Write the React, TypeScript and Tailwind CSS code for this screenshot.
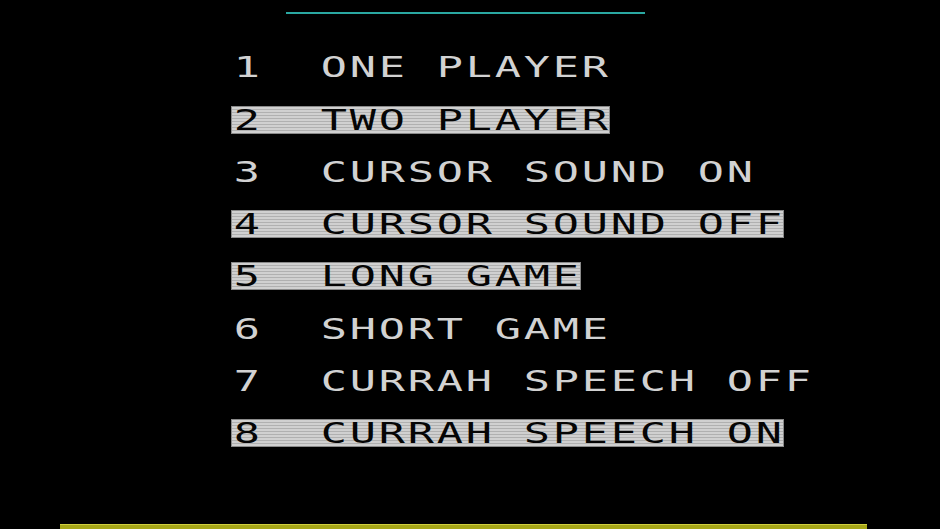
import React from "react";

const rows: { text: string; hi: boolean }[] = [
  { text: "1  ONE PLAYER", hi: false },
  { text: "2  TWO PLAYER", hi: true },
  { text: "3  CURSOR SOUND ON", hi: false },
  { text: "4  CURSOR SOUND OFF", hi: true },
  { text: "5  LONG GAME", hi: true },
  { text: "6  SHORT GAME", hi: false },
  { text: "7  CURRAH SPEECH OFF", hi: false },
  { text: "8  CURRAH SPEECH ON", hi: true },
];

function Row({ text, hi }: { text: string; hi: boolean }) {
  return (
    <div
      className={
        hi
          ? "inline-flex h-[26px] items-center self-start bg-[repeating-linear-gradient(to_bottom,#d0d0d0_0px,#d0d0d0_2px,#b0b0b0_2px,#b0b0b0_3px)] text-[#050505] outline outline-1 outline-[#8a8a8a]"
          : "inline-flex h-[26px] items-center self-start text-[#d2d2d2]"
      }
    >
      {text.split("").map((c, i) => (
        <span key={i} className="inline-flex w-[29px] justify-center">
          <span className="inline-block scale-x-[1.5] font-['DejaVu_Sans_Mono',monospace] text-[29px] leading-[26px]">
            {c === " " ? "\u00a0" : c}
          </span>
        </span>
      ))}
    </div>
  );
}

export default function App() {
  return (
    <div className="flex h-[529px] w-[940px] flex-col overflow-hidden bg-black">
      <div className="ml-[286px] mt-[12px] h-[3px] w-[359px] bg-[#2aa8a2]" />
      <div className="ml-[232px] mt-[40px] flex flex-col gap-[26.3px]">
        {rows.map((r, i) => (
          <Row key={i} text={r.text} hi={r.hi} />
        ))}
      </div>
      <div className="ml-[60px] mt-[78px] h-[6px] w-[807px] border-t border-[#d0d040] bg-[#a6a618]" />
    </div>
  );
}
